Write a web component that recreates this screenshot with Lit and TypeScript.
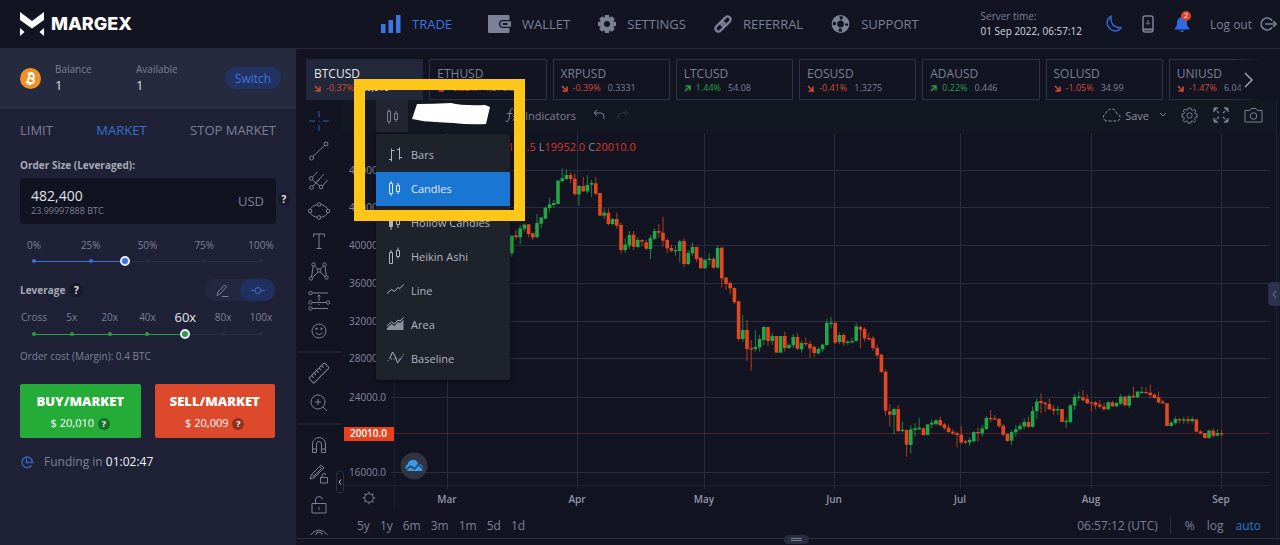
import { LitElement, html, svg, css } from "lit";
import { customElement, state } from "lit/decorators.js";
import { classMap } from "lit/directives/class-map.js";

type Candle = [up: number, top: number, bottom: number, high: number, low: number];

/* Daily candles, in thirds of a plot unit below each block's base line. */
const BLOCKS: { base: number; rows: Candle[] }[] = [
  {
    base: 150,
    rows: [
      [1,257,310,257,320],[0,256,261,240,268],[1,235,262,225,283],[1,224,236,220,245],[0,223,252,222,262],
      [0,250,262,248,270],[1,219,262,192,263],[1,203,221,200,235],[1,173,206,170,207],[1,163,174,143,185],
      [1,159,165,150,173],[1,92,162,90,162],[1,85,94,55,97],[1,75,87,58,90],[0,75,87,68,100],
      [0,86,132,70,138],[1,108,133,105,167],[0,108,124,80,126],[1,105,124,76,130],[1,99,104,90,141],
      [0,100,131,82,136],[0,129,197,129,197],[1,188,197,175,207],[0,188,222,175,226],[1,207,222,205,226],
      [0,207,227,188,235],[0,225,300,218,310],[1,284,300,265,308],[1,255,286,243,297],[0,254,290,243,300],
      [1,270,291,262,293],[0,270,275,268,287],[0,277,296,270,299],[1,264,297,255,328],[1,243,266,235,270],
      [0,243,248,222,262],[0,248,272,200,290],[0,270,295,265,310],[0,294,302,285,306],[1,300,304,288,317],
      [1,274,303,270,337],[0,273,342,265,352],[1,309,342,300,346],[1,291,310,277,318],[0,291,327,290,336],
      [0,323,355,323,355],[1,329,355,329,355],[1,326,330,310,345],[0,327,353,321,356],[1,294,353,286,355],
      [0,293,385,292,412],[0,383,402,380,420],[0,399,415,395,433],[0,414,457,412,462],[0,454,567,452,572],
      [1,540,567,495,575],[0,540,597,510,633],[0,595,598,570,662],[1,591,597,541,605],[1,567,592,555,605],
      [1,531,570,528,585],[0,531,573,530,588],[1,558,573,548,584],[0,558,608,558,608],[1,558,608,558,608],
      [0,558,594,545,605],[1,585,594,580,597],[1,561,586,552,595],[0,561,596,550,600],
    ],
  },
  {
    base: 290,
    rows: [
      [1,159,178,152,188],[0,159,162,142,168],[0,162,175,152,203],[0,171,189,165,202],[1,177,190,172,194],
      [1,164,178,161,186],[1,98,165,86,168],[1,98,101,80,115],[0,99,158,94,162],[1,135,156,127,163],
      [0,135,158,130,168],[1,155,159,150,165],[1,153,157,143,160],[1,109,153,98,154],[0,111,119,105,175],
      [0,117,145,112,155],[0,144,148,130,152],[0,145,174,138,182],[0,174,196,165,205],[0,194,246,192,248],
      [0,245,362,238,377],[0,364,374,342,410],[1,357,375,353,432],[0,357,423,345,426],[1,419,423,395,427],
      [0,420,464,418,500],[1,418,465,405,490],[1,415,420,400,440],[1,413,418,383,420],[0,415,435,412,437],
      [1,403,435,403,435],[1,398,404,390,415],[1,391,402,388,407],[0,390,406,380,408],[0,403,414,398,420],
      [0,413,426,403,428],[0,425,430,418,435],[0,430,435,425,473],[0,434,457,408,462],[0,454,458,450,462],
      [1,450,457,443,467],[1,426,454,424,458],[0,426,430,412,455],[1,415,430,405,440],[1,384,417,378,420],
      [0,384,387,360,397],[0,385,388,375,390],[0,387,409,384,412],[0,407,434,402,438],[0,432,453,430,455],
      [1,426,452,420,465],[1,418,427,405,440],[1,408,417,400,423],[1,396,409,385,418],[0,396,411,380,412],
      [1,363,411,350,412],[1,335,363,325,387],
    ],
  },
  {
    base: 350,
    rows: [
      [0,153,159,130,190],[0,158,163,155,186],[0,162,178,145,180],[0,176,182,165,195],[1,177,181,168,195],
      [0,177,216,177,216],[1,213,216,205,234],[1,166,216,163,220],[1,141,167,132,180],[1,140,144,125,153],
      [0,142,151,120,155],[0,147,160,132,162],[0,157,160,155,185],[0,157,166,153,178],[0,164,170,150,175],
      [0,170,178,158,182],[1,157,178,153,180],[0,157,169,153,170],[1,159,169,155,171],[1,140,161,132,165],
      [0,140,166,137,168],[1,138,167,133,175],[0,138,141,110,145],[1,125,142,122,145],[1,125,129,110,132],
      [0,126,129,112,132],[0,128,135,103,145],[0,134,144,130,146],[0,142,158,124,160],[0,155,160,150,162],
      [0,160,228,160,228],[1,218,228,213,230],[1,207,219,200,224],[0,207,211,205,220],[1,208,212,200,222],
      [0,208,213,198,222],[1,207,213,200,220],[0,208,245,208,245],[0,244,250,240,253],[0,249,264,249,264],
      [1,242,264,238,266],[0,242,257,235,263],[1,249,257,238,259],[0,250,253,240,258],
    ],
  },
];

const MARKETS: [string, number, string, string][] = [
  ["BTCUSD", 0, "-0.37%", "20,010"],
  ["ETHUSD", 0, "-0.32%", "1,578.35"],
  ["XRPUSD", 0, "-0.39%", "0.3331"],
  ["LTCUSD", 1, "1.44%", "54.08"],
  ["EOSUSD", 0, "-0.41%", "1.3275"],
  ["ADAUSD", 1, "0.22%", "0.446"],
  ["SOLUSD", 0, "-1.05%", "34.99"],
  ["UNIUSD", 0, "-1.47%", "6.04"],
];

const icon = (w: number, h: number, body: unknown, cls = "ln") =>
  html`<svg class=${cls} width=${w} height=${h} viewBox="0 0 ${w} ${h}" aria-hidden="true">${body}</svg>`;

const NAV: [string, unknown][] = [
  ["TRADE", icon(20, 20, svg`<path d="M0 10h4.500v9H0zM7.500 6H12v13H7.500zM15 1h4.500v18H15z"/>`, "fl")],
  ["WALLET", icon(23, 20, svg`<path fill-rule="evenodd" d="M0 1h20.500q1 0 1 1v4H15q-4 0-4 4t4 4h6.500v4q0 1-1 1H1q-1 0-1-1zM15 7.300h8v5.400h-8q-2.700 0-2.700-2.700t2.700-2.700zm.5 1.700a1 1 0 0 0 0 2h4V9z"/>`, "fl")],
  ["SETTINGS", icon(18, 20, svg`<g transform="translate(9 10)"><circle r="5" fill="none" stroke="currentColor" stroke-width="4"/>${[0, 45, 90, 135].map((a) => svg`<path transform="rotate(${a})" d="M-2-9h4l.5 3h-5zM-2 9h4l.5-3h-5z"/>`)}</g>`, "fl")],
  ["REFERRAL", icon(18, 20, svg`<g transform="rotate(-45 9 10)" fill="none" stroke="currentColor" stroke-width="2.400"><rect x="-.5" y="7" width="11" height="6" rx="3"/><rect x="7.500" y="7" width="11" height="6" rx="3"/></g>`, "fl")],
  ["SUPPORT", icon(19, 20, svg`<g fill="none" stroke="currentColor"><circle cx="9.500" cy="10" r="8.300" stroke-width="1.200"/><circle cx="9.500" cy="10" r="4" stroke-width="1.200"/><circle cx="9.500" cy="10" r="6.200" stroke-width="4.600" stroke-dasharray="6.500 3.240" stroke-dashoffset="-1.620"/></g>`, "fl")],
];

const STYLES: [string, unknown][] = [
  ["Bars", svg`<path d="M4.500 3.500v13M2 14.500h2.500M4.500 5.500h3M12.500 2.500v12M10 4.500h2.500M12.500 12.500H15"/>`],
  ["Candles", svg`<path d="M2.500 4.500h3v10h-3zM4 2v2.500M4 14.500V17M9.500 6.500h3v6h-3zM11 4v2.500M11 12.500V15"/>`],
  ["Hollow Candles", svg`<path fill="currentColor" d="M2.500 4.500h3v9h-3z"/><path d="M4 2v15M9.500 5.500h3v6h-3zM11 3v2.500M11 11.500V15"/>`],
  ["Heikin Ashi", svg`<path d="M2.500 5.500h3v11h-3zM4 3v2.500M9.500 3.500h3v6h-3zM11 .5v3M11 9.500v2"/>`],
  ["Line", svg`<path d="M0 12.500l4.500-4 3 2 3.500-4 2 1 3.500-4"/>`],
  ["Area", svg`<path d="M0 11l4.500-4 3 2 3.500-4 2 1 3.500-3.500"/><path fill="currentColor" stroke="none" opacity=".75" d="M0 15v-2l4.500-4 3 2 3.500-4 2 1 3.500-3.500V15z"/>`],
  ["Baseline", svg`<path d="M2.500 10l3-7 2.500 4 2.500 7 4-5.500"/><path stroke-dasharray="1 1.500" d="M-1 14l3-4M4 10h9M15 8l2-4"/>`],
];

const TOOLS: (unknown | null)[] = [
  svg`<g class="blue"><path d="M11 1v6M11 15v6M1 11h6M15 11h6"/><path d="M11 10.500v1"/></g>`,
  svg`<circle cx="3.500" cy="18" r="2"/><circle cx="18" cy="4" r="2"/><path d="M5 16.500L16.500 5.500"/>`,
  svg`<circle cx="3" cy="8.500" r="1.800"/><circle cx="13" cy="17" r="1.800"/><circle cx="3.500" cy="17.500" r="1.800"/><path d="M4.500 7l5-5M4.300 9.800l7.500 6M5 16L16 4M14.500 16l5-6M8 13l4-4"/>`,
  svg`<ellipse cx="11" cy="11" rx="9" ry="6.500"/><g class="knock"><circle cx="11" cy="4.500" r="1.800"/><circle cx="11" cy="17.500" r="1.800"/><circle cx="2" cy="11" r="1.800"/><circle cx="20" cy="11" r="1.800"/></g>`,
  svg`<path d="M5.500 7V4h11v3M11 4v14M8.500 18.500h5"/>`,
  svg`<circle cx="5.500" cy="4.500" r="1.700"/><circle cx="16.500" cy="4.500" r="1.700"/><circle cx="3" cy="18.500" r="1.700"/><circle cx="18.500" cy="17.500" r="1.700"/><circle cx="11" cy="10.500" r="1.700"/><path d="M5.200 6.200L3.500 17M6.500 6l3.500 3.500M15.500 6L12 9.500M17 6l1.300 10M10 12l-5.500 5.500M12 12l5 4.500"/>`,
  svg`<circle cx="2.500" cy="3" r="1.700"/><circle cx="2.500" cy="18.500" r="1.700"/><circle cx="2.500" cy="12.500" r="1.700"/><circle cx="20" cy="12.500" r="1.700"/><path d="M4.500 3H20M4.500 18.500H20M4.500 12.500H18M11 5v6M9.500 6.500L11 5l1.500 1.500M11 15v-1"/>`,
  svg`<circle cx="11" cy="11" r="7"/><path d="M7.500 12.500q3.500 4 7 0"/><path stroke-width="2" d="M8.500 7.800v2M13.500 7.800v2"/>`,
  null,
  svg`<g transform="rotate(-45 11 11)"><rect x="0" y="7.500" width="22" height="7" rx="1"/><path d="M4 7.500v3M7.500 7.500v3M11 7.500v3M14.500 7.500v3M18 7.500v3"/></g>`,
  svg`<circle cx="10" cy="10" r="7"/><path d="M15 15l4 4M10 7v6M7 10h6"/>`,
  null,
  svg`<path d="M4.500 18.500V10a6.500 6.500 0 0 1 13 0v8.500h-4V10a2.500 2.500 0 0 0-5 0v8.500zM4.500 15h4M13.500 15h4"/>`,
  svg`<g transform="translate(0 -1)"><path d="M2 16l1.500-4.500L13 2l3 3-9.500 9.500zM4 11.500l2.500 2.500M11.500 3.500l3 3M6 13l7-7"/><path class="knock" d="M12.500 14.500h7v5.500h-7z"/><path d="M14 14.500v-2q0-2 2-2t2 1.500"/></g>`,
  svg`<path d="M4 9.500h14v9.500H4zM7.500 9.500V6q0-3.500 3.500-3.500 3 0 3.500 3M11 13v3"/>`,
  svg`<path d="M2.500 11q8.500-10 17 0-8.500 10-17 0z"/><circle cx="11" cy="11" r="3"/>`,
];

const PRICES: [number, string][] = [
  [170, "48000.0"], [207, "44000.0"], [245, "40000.0"], [283, "36000.0"],
  [321, "32000.0"], [358, "28000.0"], [397, "24000.0"], [472, "16000.0"],
];
const MONTHS: [number, string][] = [
  [447, "Mar"], [577, "Apr"], [704, "May"], [834, "Jun"], [960, "Jul"], [1091, "Aug"], [1221, "Sep"],
];

@customElement("app-root")
export class AppRoot extends LitElement {
  @state() private chartStyle = "Candles";
  @state() private size = 40;
  @state() private leverage = 4;

  static styles = css`
    * { box-sizing: border-box; }
    :host {
      display: grid;
      grid-template-rows: 49px minmax(0, 1fr);
      height: 100vh;
      overflow: hidden;
      background: #121421;
      color: #7b8096;
      font-family: "Open Sans", "Noto Sans", sans-serif;
      font-size: 13px;
    }
    button, input { font: inherit; color: inherit; background: none; border: 0; padding: 0; margin: 0; }
    button { cursor: pointer; }
    a { color: inherit; text-decoration: none; }
    svg { display: block; flex: none; }
    .ln { fill: none; stroke: currentColor; }
    .fl { fill: currentColor; }
    .blue { stroke: #2464b4; color: #2464b4; }
    .knock { fill: #121421; }

    .top {
      display: grid;
      grid-template-columns: 381px 1fr auto;
      align-items: center;
      border-bottom: 1px solid #272a3d;
      padding-right: 3px;
      white-space: nowrap;
    }
    .brand { display: flex; align-items: center; gap: 7px; padding-left: 20px; color: #fff; font: 800 18px/24px Inter, sans-serif; }
    .nav { display: flex; gap: 28px; }
    .nav a { display: flex; align-items: center; gap: 11px; }
    .nav a:first-child { margin-right: 8px; }
    .nav .on { color: #3c74e0; }
    .status { display: flex; align-items: center; gap: 20px; }
    .clock { font-size: 10px; line-height: 15px; margin-right: 4px; }
    .clock time { display: block; color: #d2d5e0; }
    .status .moon { color: #3367d6; }
    .bell { position: relative; color: #2f6ae0; }
    .badge {
      position: absolute; top: -4px; right: -1px; width: 10px; height: 10px; border-radius: 5px;
      background: #d9452c; color: #fff; font-size: 7px; line-height: 10px; text-align: center;
    }
    .logout { display: flex; align-items: center; gap: 8px; font-size: 12px; }

    .body { display: grid; grid-template-columns: 297px minmax(0, 1fr); min-height: 0; }
    .side { background: #1f2236; border-right: 1px solid #141624; }
    .wallet {
      display: flex; align-items: center; height: 60px; padding: 0 15px 0 20px;
      background: #262a3f; border-bottom: 2px solid #2d3147; font-size: 10px;
    }
    .wallet dl { display: flex; flex: 1; margin: 0 0 0 14px; }
    .wallet dl div { width: 81px; }
    .wallet dt { line-height: 14px; }
    .wallet dd { margin: 0; color: #dcdfe8; font-size: 13px; line-height: 18px; }
    .switch { width: 56px; height: 22px; border-radius: 11px; background: #223262; color: #3f72dc; font-size: 12px; }
    .tabs { display: flex; justify-content: space-between; padding: 11px 20px 0; line-height: 20px; }
    .tabs .on { color: #3c6cd0; }
    .form { padding: 17px 21px 0 20px; }
    .cap { display: block; color: #a5a9b8; font-size: 10px; font-weight: 700; line-height: 16px; }
    .sizebox { display: flex; align-items: center; margin-right: -15px; gap: 2px; }
    .amount {
      display: flex; align-items: center; width: 256px; height: 46px; margin-top: 5px; padding: 0 12px 0 11px;
      border-radius: 4px; background: #121320; flex: none;
    }
    .amount input { display: block; width: 150px; color: #dfe1ea; font-size: 14px; line-height: 18px; height: 18px; outline: 0; }
    .amount small { display: block; font-size: 9px; line-height: 11px; }
    .amount div { flex: 1; }
    .q { color: #e4e6ee; font-size: 10px; font-weight: 700; width: 14px; text-align: center; background: #191b2b; border-radius: 7px; line-height: 14px; }
    .ticks { display: flex; justify-content: space-between; align-items: center; margin: 0 14px; font-size: 10px; height: 18px; }
    .ticks span { width: 0; display: flex; justify-content: center; white-space: nowrap; }
    .ticks.pct { margin-top: 12px; }
    .ticks .on { font-size: 13px; color: #e3e5ee; }
    .slider { display: grid; margin: 0 9px; align-items: center; height: 14px; color: #3b72d8; }
    .slider > * { grid-area: 1 / 1; }
    .slider.green { color: #2d9c45; }
    .rail { margin: 0 5px; height: 1px; background: #2b2f45; }
    .fill { height: 1px; background: currentColor; }
    .dots { display: flex; justify-content: space-between; margin: 0 3px; }
    .dots i { width: 4px; height: 4px; border-radius: 2px; background: #292d42; }
    .dots i.on { background: currentColor; }
    .slider input { appearance: none; width: 100%; height: 10px; z-index: 1; }
    .slider input::-webkit-slider-thumb {
      appearance: none; width: 10px; height: 10px; border-radius: 5px; border: 2px solid #e8ecf8; background: currentColor;
    }
    .levrow { display: flex; align-items: center; gap: 4px; height: 24px; margin-top: 10px; }
    .mode { display: flex; margin-left: auto; border-radius: 11px; background: #232740; height: 22px; }
    .mode button { display: grid; place-items: center; width: 35px; border-radius: 11px; }
    .mode .on { background: #203160; color: #3c6cd0; }
    .ticks.lev { margin-top: 5px; height: 20px; }
    .cost { margin: 7px 0 0; font-size: 10px; line-height: 16px; }
    .deal { display: grid; grid-template-columns: 1fr 1fr; gap: 14px; margin-top: 20px; }
    .deal button { height: 54px; color: #fff; border-radius: 2px; font-size: 11px; line-height: 18px; }
    .deal b { display: block; font-size: 13px; font-weight: 800; line-height: 20px; margin-bottom: 3px; }
    .buy { background: #24ab38; }
    .sell { background: #dc4a2b; }
    .tip { display: inline-block; width: 12px; height: 12px; border-radius: 6px; margin-left: 1px; background: rgba(0, 0, 0, 0.35); font-size: 9px; font-weight: 700; line-height: 12px; }
    .fund { display: flex; align-items: center; gap: 10px; margin: 14px 0 0; font-size: 12px; line-height: 20px; }
    .fund svg { color: #3767c8; }
    .fund time { color: #f0f1f6; }

    .main { display: flex; flex-direction: column; min-width: 0; overflow: hidden; position: relative; }
    .markets { position: relative; padding: 10px 0 0 9px; flex: none; }
    .cards { display: grid; grid-template-columns: repeat(8, minmax(0, 1fr)); gap: 6px; margin-right: -6px; }
    .card { height: 41px; padding: 6px 7px 5px; border: 1px solid #2e3146; text-align: left; overflow: hidden; font-size: 12px; line-height: 16px; }
    .card.on { background: #23273a; border-color: #23273a; color: #e6e8f0; }
    .row { display: flex; align-items: center; gap: 5px; font-size: 9px; line-height: 12px; }
    .row .price { margin-left: 2px; }
    .down { color: #d34a34; }
    .up { color: #22a045; }
    .more {
      position: absolute; right: 0; top: 9px; width: 44px; height: 43px; padding-left: 8px; color: #9a9fb2;
      background: linear-gradient(90deg, rgba(18, 20, 33, 0.1), #121421 60%);
    }

    .work { display: flex; flex: 1; min-height: 0; padding-right: 3px; border-bottom: 1px solid #2b2e40; }
    .tools { display: flex; flex-direction: column; align-items: center; width: 44px; flex: none; margin-bottom: 3px; padding-top: 6px; overflow: hidden; }
    .tools button { flex: none; height: 30px; }
    .tools hr { width: 100%; flex: none; height: 2px; margin: 5px 0; border: 0; background: #1e2131; }
    .foot { flex: none; height: 6px; }
    .chartcol { position: relative; flex: 1; min-width: 0; border-right: 1px solid #222537; }
    .bar { display: flex; align-items: center; height: 32px; padding: 0 13px 2px 35px; background: #131722; font-size: 11px; }
    .bar button { display: flex; align-items: center; justify-content: center; }
    .bar .style { width: 32px; height: 32px; background: #22252f; align-self: flex-start; flex: none; }
    .bar .compare { width: 34px; }
    .bar .ind { margin: 0 17px 0 63px; gap: 6px; }
    .bar .redo { margin: 0 auto 0 12px; opacity: 0.25; }
    .bar .save { gap: 4px; margin-right: 10px; color: #8b90a2; }
    .bar .gap { margin-left: 14px; }
    .plot { width: 100%; height: auto; font-size: 10px; }
    .plot text { fill: #8388a0; }
    .plot .grid { stroke: #292c3e; }
    .plot .mid { text-anchor: middle; font-weight: 600; fill: #9296a8; }
    .plot .end { text-anchor: end; }
    .plot .hot { fill: #fff; font-weight: 600; }
    .ohlc { position: absolute; top: 40px; left: 146px; font-size: 11px; line-height: 14px; color: #d6392b; display: flex; gap: 3px; }
    .ohlc i { font-style: normal; color: #8b90a2; }
    .range { display: flex; align-items: center; height: 29px; padding: 1px 15px 0 16px; gap: 12px; font-size: 12px; }
    .spans { display: flex; gap: 10px; }
    .range .utc { margin-left: auto; }
    .range .sep { width: 1px; height: 18px; background: #2b2e40; margin: 0 2px 0 0; }
    .range .on { color: #2b78cc; }
    .menu { position: absolute; top: 34px; left: 35px; width: 134px; padding: 4px 0; margin: 0; background: #1e222b; border-radius: 2px; box-shadow: 0 2px 4px rgba(0, 0, 0, 0.5); }
    .menu button { display: flex; align-items: center; gap: 7px; width: 100%; height: 34px; padding: 0 0 2px 11px; font-size: 11px; color: #b0b4c0; }
    .menu .on { background: #1976d2; color: #e2ebf6; }
    .scrub { position: absolute; top: 2px; left: 70px; }
    .mark { position: absolute; top: -21px; left: 13px; width: 171px; height: 142px; border: 11px solid #ffc61a; pointer-events: none; }
    .tab { position: absolute; display: grid; place-items: center; background: #1b1e2f; border: 1px solid #2b2f45; }
    .tab.l { left: 39px; bottom: 52px; width: 8px; height: 22px; border-radius: 3px; color: #c8cbd6; background: #121421; }
    .tab.r { right: 0; top: 233px; width: 12px; height: 24px; border-radius: 4px 0 0 4px; background: #2c3250; }
    .tab.b { left: 487px; bottom: 1px; width: 25px; height: 9px; border-radius: 5px; background: #2a2d42; }
  `;

  private candles() {
    let day = 0;
    return BLOCKS.flatMap(({ base, rows }) =>
      rows.map(([up, top, bottom, high, low]) => {
        const x = 511.8 + 4.2 * day++;
        const y = (v: number) => base + v / 3;
        const color = up ? "#22a648" : "#e2471f";
        const h = Math.max(1.2, (bottom - top) / 3);
        return svg`<path d="M${x} ${y(high)}V${y(low)}" stroke=${color} stroke-width=".9" opacity=".85"/><rect x=${x - 1.8} y=${y(top)} width="3.600" height=${h} fill=${color}/>`;
      })
    );
  }

  private plot() {
    return html`<svg class="plot" viewBox="341 132 935 378" role="img" aria-label="BTCUSD price chart">
      <g class="grid">
        ${PRICES.map(([y]) => svg`<path d="M391 ${y + 0.5}H1270"/>`)}
        ${MONTHS.map(([x]) => svg`<path d="M${x + 0.5} 133V489"/>`)}
        <path d="M341 485.500H1270M394.500 133V508" stroke="#1f2232"/>
      </g>
      <path d="M394 433.500H1270" stroke="#5c2430" opacity=".8"/>
      ${this.candles()}
      ${PRICES.map(([y, t]) => svg`<text class="end" x="386" y=${y + 4}>${t}</text>`)}
      <rect x="344" y="427" width="50" height="14" fill="#e8421c"/>
      <text class="end hot" x="387" y="437">20010.0</text>
      ${MONTHS.map(([x, t]) => svg`<text class="mid" x=${x} y="503">${t}</text>`)}
      <g transform="translate(369 498)" fill="none" stroke="#7b8096"><circle r="4.300"/>
        ${[0, 45, 90, 135, 180, 225, 270, 315].map((a) => svg`<path transform="rotate(${a})" d="M0-4.500V-6.300"/>`)}</g>
      <circle cx="414" cy="466" r="13.500" fill="#303442"/>
      <path d="M408 471a3.500 3.500 0 0 1-.5-6.500q1-5 6-4.500 2.500-1 4.500 3.500 5 1 5 5 0 2.500-2.500 2.500z" fill="#3c9be0"/>
      <path d="M405 471l5.500-5 4 3 4-4.500 5 5" fill="none" stroke="#20456e" stroke-width="1.600"/>
    </svg>`;
  }

  render() {
    return html`
      <header class="top">
        <div class="brand">
          <svg width="24" height="24" viewBox="0 0 24 24" fill="currentColor" aria-hidden="true"><path d="M0 0l12 9L24 0v8L12 16.500 0 8zM0 16l4.500 4L0 24zM24 16l-4.500 4 4.500 4z"/></svg>
          <span>MARGEX</span>
        </div>
        <nav class="nav">${NAV.map(([t, i], n) => html`<a href="#" class=${classMap({ on: n === 0 })}>${i}${t}</a>`)}</nav>
        <div class="status">
          <div class="clock">Server time:<time>01 Sep 2022, 06:57:12</time></div>
          <button class="moon" aria-label="Dark mode">${icon(16, 18, svg`<path stroke-width="1.500" d="M5 1.500Q0 4.500 1.500 10q2.500 6 8.500 6 3.500-.5 5-3.500Q4 13 5 1.500z"/>`)}</button>
          <button aria-label="Mobile app">${icon(12, 18, svg`<rect x="1" y="1" width="10" height="16" rx="2" stroke-width="1.500"/><path stroke-width="2" d="M1 14.500h10"/><path d="M6 5v4M4 7.500l2 2 2-2"/>`)}</button>
          <button class="bell" aria-label="Notifications">${icon(16, 18, svg`<path d="M8 2q5 .5 5 6 0 4 2.500 5.500v1H.5v-1Q3 12 3 8q0-5.500 5-6zM5.500 15.500h5Q8 18.500 5.500 15.500z"/>`, "fl")}<span class="badge">2</span></button>
          <a class="logout" href="#">Log out ${icon(17, 16, svg`<path stroke-width="1.600" d="M12 4.500A6 6 0 1 0 12 11.500M5 8h11M13 5l3 3-3 3"/>`)}</a>
        </div>
      </header>
      <div class="body">
        <aside class="side">
          <div class="wallet">
            <svg width="21" height="21" viewBox="0 0 21 21" aria-hidden="true"><circle cx="10.500" cy="10.500" r="10.500" fill="#ee9227"/><g transform="rotate(12 10.500 10.500)" fill="none" stroke="#fff" stroke-width="1.800"><path d="M6.500 6h5a2 2 0 0 1 0 4.300H8.500 12a2.300 2.300 0 0 1 0 4.600H6.500M8.500 6v9M9.500 4v2M11.500 4v2M9.500 15v2M11.500 15v2"/></g></svg>
            <dl><div><dt>Balance</dt><dd>1</dd></div><div><dt>Available</dt><dd>1</dd></div></dl>
            <button class="switch">Switch</button>
          </div>
          <div class="tabs"><button>LIMIT</button><button class="on">MARKET</button><button>STOP MARKET</button></div>
          <div class="form">
            <label class="cap" for="amount">Order Size (Leveraged):</label>
            <div class="sizebox">
              <div class="amount"><div><input id="amount" value="482,400" /><small>23.99997888 BTC</small></div>USD</div>
              <button class="q" aria-label="About order size">?</button>
            </div>
            <div class="ticks pct">${["0%", "25%", "50%", "75%", "100%"].map((t) => html`<span>${t}</span>`)}</div>
            <div class="slider">
              <div class="rail"><div class="fill" style="width:${this.size}%"></div></div>
              <div class="dots">${[0, 25, 50, 75, 100].map((v) => html`<i class=${classMap({ on: v <= this.size })}></i>`)}</div>
              <input type="range" min="0" max="100" .value=${String(this.size)} aria-label="Order size percent"
                @input=${(e: Event) => (this.size = +(e.target as HTMLInputElement).value)} />
            </div>
            <div class="levrow">
              <label class="cap" for="lev">Leverage</label><button class="q" aria-label="About leverage">?</button>
              <div class="mode">
                <button aria-label="Type leverage">${icon(13, 13, svg`<path d="M1 11.500l1-3.500 6.500-7 2 2L4 10zM6 12.500h6.500"/>`)}</button>
                <button class="on" aria-label="Slide leverage">${icon(14, 13, svg`<circle cx="7" cy="6.500" r="3"/><path d="M0 6.500h4M10 6.500h4"/>`)}</button>
              </div>
            </div>
            <div class="ticks lev">${["Cross", "5x", "20x", "40x", "60x", "80x", "100x"].map((t, n) => html`<span class=${classMap({ on: n === this.leverage })}>${t}</span>`)}</div>
            <div class="slider green">
              <div class="rail"><div class="fill" style="width:${(this.leverage / 6) * 100}%"></div></div>
              <div class="dots">${[0, 1, 2, 3, 4, 5, 6].map((v) => html`<i class=${classMap({ on: v <= this.leverage })}></i>`)}</div>
              <input id="lev" type="range" min="0" max="6" .value=${String(this.leverage)}
                @input=${(e: Event) => (this.leverage = +(e.target as HTMLInputElement).value)} />
            </div>
            <p class="cost">Order cost (Margin): 0.4 BTC</p>
            <div class="deal">
              <button class="buy"><b>BUY/MARKET</b>$ 20,010 <span class="tip">?</span></button>
              <button class="sell"><b>SELL/MARKET</b>$ 20,009 <span class="tip">?</span></button>
            </div>
            <p class="fund">${icon(14, 14, svg`<path stroke-width="1.300" d="M11.500 10.500A5.300 5.300 0 1 1 12 5M6.500 3.500v4H9.500M10 7.500h3.500M12 5v2.500"/>`)}<span>Funding in <time>01:02:47</time></span></p>
          </div>
        </aside>
        <main class="main">
          <div class="markets">
            <div class="cards">
              ${MARKETS.map(([name, up, pct, price], n) => html`<button class=${classMap({ card: true, on: n === 0 })}>
                ${name}
                <div class="row"><span class=${up ? "up" : "down"}>${icon(7, 7, up
                  ? svg`<path stroke-width="1.500" d="M1 6l5-5M1.500 1H6v4.500"/>`
                  : svg`<path stroke-width="1.500" d="M1 1l5 5M6 1.500V6H1.500"/>`)}</span><span class=${up ? "up" : "down"}>${pct}</span><span class="price">${price}</span></div>
              </button>`)}
            </div>
            <button class="more" aria-label="More markets">${icon(10, 18, svg`<path stroke-width="1.500" d="M1 2l7 7-7 7"/>`)}</button>
          </div>
          <div class="work">
            <div class="tools">${TOOLS.map((t) => (t ? html`<button aria-label="Drawing tool">${icon(22, 22, t)}</button>` : html`<hr />`))}</div>
            <section class="chartcol">
              <div class="bar">
                <button class="style" aria-label="Chart style">${icon(15, 19, STYLES[1][1])}</button>
                <button class="compare" aria-label="Compare">${icon(14, 14, svg`<circle cx="7" cy="7" r="6"/><path d="M4 7h6M7 4v6"/>`)}</button>
                <button class="ind">${icon(14, 16, svg`<path d="M8.500 2.500Q6-.5 5 5l-1 7Q3 16 .5 14M1.500 6.500h6M7.500 8.500l5 5M12.500 8.500l-5 5"/>`)}Indicators</button>
                <button aria-label="Undo">${icon(12, 12, svg`<path d="M4 1L1 4l3 3M1 4h7q3 0 3 4v2"/>`)}</button>
                <button class="redo" aria-label="Redo">${icon(12, 12, svg`<path d="M8 1l3 3-3 3M11 4H4Q1 4 1 8v2"/>`)}</button>
                <button class="save">${icon(20, 14, svg`<path stroke-dasharray="3 1.500" d="M5 13a4 4 0 0 1 0-7.500q1.500-5 6.500-4.500 3 .5 4 4.500 4 1 3.500 4.500-.5 3-4 3z"/>`)}Save</button>
                <button aria-label="Save options">${icon(8, 6, svg`<path d="M1 1l3 3 3-3"/>`)}</button>
                <button class="gap" aria-label="Settings">${icon(17, 17, svg`<circle cx="8.500" cy="8.500" r="2.700"/><path stroke-linejoin="round" d="M7 1h3l.4 2 1.200.500L13.500 2.300 15 4l-1.200 1.800.500 1.200L16 7.200v3l-2 .4-.5 1.200 1.200 1.800-1.800 1.600-1.700-1.200-1.200.5L9.800 16.200H7.200l-.5-1.800-1.200-.5-1.800 1.200L2.200 13.300l1.200-1.800L3 10.300 1 10V7.200l2-.4.5-1.200L2.200 3.800 4 2.200l1.600 1.200L6.700 3z"/>`)}</button>
                <button class="gap" aria-label="Full screen">${icon(18, 18, svg`<path stroke-width="1.300" stroke-dasharray="3.500 1" d="M6 2H2v4M12 2h4v4M6 16H2v-4M12 16h4v-4M2 2l5 5M16 2l-5 5M2 16l5-5M16 16l-5-5"/>`)}</button>
                <button class="gap" aria-label="Take a snapshot">${icon(19, 16, svg`<path d="M1 3.500h4.500l1.500-2h5l1.500 2H18V15H1z"/><circle cx="9.500" cy="9" r="3.300"/>`)}</button>
              </div>
              ${this.plot()}
              <div class="range">
                <div class="spans">${["5y", "1y", "6m", "3m", "1m", "5d", "1d"].map((t) => html`<button>${t}</button>`)}</div>
                <button class="utc">06:57:12 (UTC)</button><span class="sep"></span>
                <button>%</button><button>log</button><button class="on">auto</button>
              </div>
              <div class="ohlc"><span><i>H</i>20161.5</span><span><i>L</i>19952.0</span><span><i>C</i>20010.0</span></div>
              <div class="menu">
                ${STYLES.map(([t, i]) => html`<button class=${classMap({ on: t === this.chartStyle })} @click=${() => (this.chartStyle = t)}>${icon(17, 19, i)}${t}</button>`)}
              </div>
              <svg class="scrub" width="80" height="24" viewBox="0 0 80 24" aria-hidden="true"><path fill="#fff" d="M6 2q16 0 34-1 12 3 34 2l5 2-4 17q-16 1-33-1-20-1-30-2l-11-2z"/></svg>
              <div class="mark"></div>
            </section>
          </div>
          <div class="foot"></div>
          <button class="tab l" aria-label="Hide tools">${icon(4, 8, svg`<path d="M3 1.500L1 4l2 2.500"/>`)}</button>
          <button class="tab r" aria-label="Show panel">${icon(5, 9, svg`<path d="M4 1L1 4.500 4 8"/>`)}</button>
          <button class="tab b" aria-label="Show positions">${icon(11, 3, svg`<path d="M0 .5h11M0 2.500h11"/>`)}</button>
        </main>
      </div>
    `;
  }
}
